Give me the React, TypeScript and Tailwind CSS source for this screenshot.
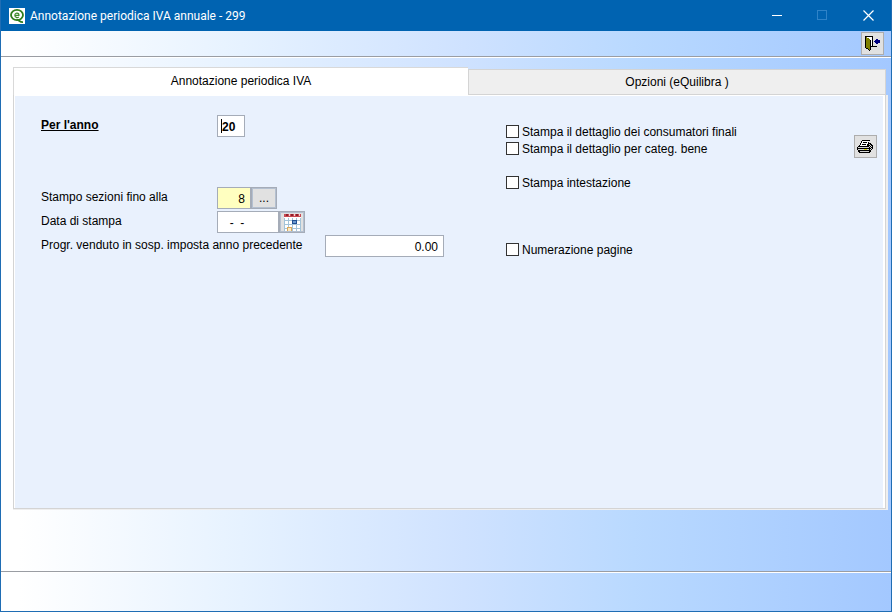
import React from 'react';

const AppLogo = () => (
  <svg className="size-4 bg-white" viewBox="0 0 16 16" fill="none" aria-hidden="true">
    <ellipse cx="8" cy="7" rx="6" ry="5.2" stroke="#2f7d1c" strokeWidth="1.8" />
    <path d="M5.8 7.4H10C10.2 4.6 6 4.2 5.8 7.2C5.7 9.6 8.6 10 9.8 8.8" stroke="#3f8a2b" strokeWidth="1.1" />
    <path d="M7.5 11.4C10 11.6 10.6 14.4 14 14.2" stroke="#2f7d1c" strokeWidth="1.8" />
  </svg>
);

const ExitIcon = () => (
  <svg className="h-4 w-[17px]" viewBox="0 0 17 16" shapeRendering="crispEdges" aria-hidden="true">
    <path d="M1 0H9V10H13V11H7V14H6V15H5V14H4V13H2V12H1Z" fill="#000" />
    <path d="M3 1H8V10H7V4H6V3H5V2H3Z" fill="#fff" />
    <path d="M2 1H3V2H5V3H6V14H5V13H4V12H2Z" fill="#808000" />
    <path d="M10 5H11V4H12V3H14V4H16V7H14V8H12V7H11V6H10Z" fill="#000080" />
  </svg>
);

const PrinterIcon = () => (
  <svg className="h-4 w-[17px]" viewBox="0 0 17 16" shapeRendering="crispEdges" aria-hidden="true">
    <path d="M5 1H13V2H12V4H14V5H15V6H16V10H15V11H14V13H13V14H2V13H1V11H0V8H1V7H2V6H3V4H4V2H5Z" fill="#000" />
    <path d="M5 2H12V3H11V5H10V7H3V6H4V4H5Z" fill="#fff" />
    <path d="M6 3H10V4H6ZM5 5H9V6H5Z" fill="#000" />
    <path d="M1 8H12V9H1ZM1 10H12V11H1ZM3 12H12V13H3ZM12 5H13V6H12ZM13 6H14V7H13ZM12 7H13V8H12ZM14 7H15V8H14ZM13 8H14V9H13ZM14 9H15V10H14ZM13 10H14V11H13Z" fill="#d4d4d4" />
    <path d="M7 10H10V11H7Z" fill="#d8d800" />
  </svg>
);

const CalendarIcon = () => (
  <svg className="h-[17px] w-[19px]" viewBox="0 0 19 17" shapeRendering="crispEdges" aria-hidden="true">
    <path d="M1 0H18V17H1Z" fill="#fff" />
    <path d="M1 0H18V3H1Z" fill="#c84a52" />
    <path d="M3 0H5V2H3ZM8 0H10V2H8ZM13 0H15V2H13Z" fill="#8f1f2b" />
    <path d="M6 0H7V2H6ZM11 0H12V2H11ZM16 0H17V2H16Z" fill="#f0d0d0" />
    <path d="M1 4H2V17H1ZM5 4H6V17H5ZM9 4H10V17H9ZM13 4H14V17H13ZM17 4H18V17H17ZM1 6H18V7H1ZM1 10H18V11H1ZM1 14H18V15H1Z" fill="#a3c3d8" />
    <path d="M9 6H14V10H9Z" fill="#1f4f93" />
    <path d="M10 7H13V9H10Z" fill="#6a9ad0" />
    <path d="M4 13H9V17H4Z" fill="#d9a85c" />
    <path d="M5 14H8V17H5Z" fill="#fbe9c4" />
  </svg>
);

const CheckOption = ({ id, label }: { id: string; label: string }) => (
  <div className="flex h-[17px] items-center gap-[3px]">
    <input id={id} type="checkbox" className="size-[13px] appearance-none border border-[#333] bg-white checked:bg-[#0063b1]" />
    <label htmlFor={id}>{label}</label>
  </div>
);

const field = 'h-[22px] border border-[#a5acb8] px-[5px] pt-[2px] outline-none';
const sideButton = 'flex h-[22px] items-center justify-center border-2 border-[#b4c0d0] bg-[#e1e1e1] outline outline-1 -outline-offset-1 outline-[#a5acb8]';
const iconButton = 'flex size-[23px] shrink-0 items-center justify-center border border-[#adadad] bg-[#e1e1e1]';

export default function App() {
  return (
    <div className="flex min-h-screen flex-col border border-t-0 border-[#1f6db4] bg-[linear-gradient(90deg,#ffffff_2%,#e6f2ff_27%,#cfe2ff_52%,#b9d9ff_71%,#a3c8ff_100%)] font-['Liberation_Sans',Arial,sans-serif] text-[12px] leading-[14px] text-black">
      <header className="flex h-[31px] items-center bg-[#0063b1] pl-2 text-white">
        <AppLogo />
        <h1 className="ml-[5px] flex-1 font-['Roboto','Noto_Sans',sans-serif] text-[12px]">Annotazione periodica IVA annuale - 299</h1>
        <button type="button" aria-label="Riduci a icona" className="flex h-full w-[45px] items-center justify-center">
          <svg className="size-[11px]" viewBox="0 0 11 11" stroke="#fff" shapeRendering="crispEdges"><path d="M0 5.5H10" /></svg>
        </button>
        <button type="button" aria-label="Ingrandisci" disabled className="flex h-full w-[45px] items-center justify-center">
          <svg className="size-[11px]" viewBox="0 0 11 11" fill="none" stroke="#2f83c8" shapeRendering="crispEdges"><path d="M.5.5H9.5V9.5H.5Z" /></svg>
        </button>
        <button type="button" aria-label="Chiudi" className="flex h-full w-[46px] items-center justify-center">
          <svg className="size-[11px]" viewBox="0 0 11 11" stroke="#fff" strokeWidth="1.2"><path d="M.5.5L10.5 10.5M10.5.5L.5 10.5" /></svg>
        </button>
      </header>

      <div className="flex h-[27px] items-start justify-end border-b border-white pt-px pr-[7px] shadow-[inset_0_-1px_0_#9a9da3]">
        <button type="button" aria-label="Esci" className={iconButton}><ExitIcon /></button>
      </div>

      <main className="mt-[9px] mr-[3px] ml-3 flex flex-1 flex-col">
        <div role="tablist" className="flex h-7 items-end">
          <button type="button" role="tab" aria-selected="true" className="h-7 w-[52%] border border-r-0 border-b-0 border-[#d9d9d9] bg-white pb-[2px]">Annotazione periodica IVA</button>
          <button type="button" role="tab" aria-selected="false" className="mr-[2px] h-[26px] flex-1 border border-[#d4d4d4] bg-[#efefef]">Opzioni (eQuilibra )</button>
        </div>

        <section className="flex flex-1 border-r-2 border-b border-[#efefef]">
          <div className="flex flex-1 items-start border border-t-0 border-[#d4d4d4] bg-[#e9f1fd] pt-5 pr-2 pl-[27px] shadow-[inset_1px_1px_0_#fff,inset_-2px_0_0_#fff]">
            <form className="flex w-[465px] flex-col gap-[2px]">
              <div className="mb-12 flex">
                <label htmlFor="anno" className="w-44 pt-[3px] font-bold underline">Per l'anno</label>
                <div className="relative">
                  <input id="anno" defaultValue="20" className={`${field} w-7 bg-white pl-1 font-bold caret-transparent`} />
                  <span className="pointer-events-none absolute top-1 left-1 h-[14px] w-px bg-black" />
                </div>
              </div>
              <div className="flex">
                <label htmlFor="sezioni" className="w-44 pt-[3px]">Stampo sezioni fino alla</label>
                <input id="sezioni" defaultValue="8" className={`${field} w-[34px] bg-[#ffffc0] text-right`} />
                <button type="button" aria-label="Scegli sezione" className={`${sideButton} w-[26px]`}>...</button>
              </div>
              <div className="flex">
                <label htmlFor="data" className="w-44 pt-[3px]">Data di stampa</label>
                <input id="data" defaultValue="  -  -" className={`${field} w-[62px] bg-white whitespace-pre`} />
                <button type="button" aria-label="Apri calendario" className={`${sideButton} w-[26px]`}><CalendarIcon /></button>
              </div>
              <div className="flex">
                <label htmlFor="venduto" className="w-[284px] pt-[3px]">Progr. venduto in sosp. imposta anno precedente</label>
                <input id="venduto" defaultValue="0.00" className={`${field} w-[119px] bg-white text-right`} />
              </div>
            </form>

            <div className="flex flex-1 flex-col pt-2">
              <CheckOption id="finali" label="Stampa il dettaglio dei consumatori finali" />
              <CheckOption id="bene" label="Stampa il dettaglio per categ. bene" />
              <div className="mt-[17px] mb-[50px]">
                <CheckOption id="intestazione" label="Stampa intestazione" />
              </div>
              <CheckOption id="pagine" label="Numerazione pagine" />
            </div>

            <button type="button" aria-label="Stampa" className={`${iconButton} mt-5`}><PrinterIcon /></button>
          </div>
        </section>
      </main>

      <div className="h-[62px] border-b border-[#9a9da3]" />
      <footer className="h-[39px] border-t border-white" />
    </div>
  );
}
